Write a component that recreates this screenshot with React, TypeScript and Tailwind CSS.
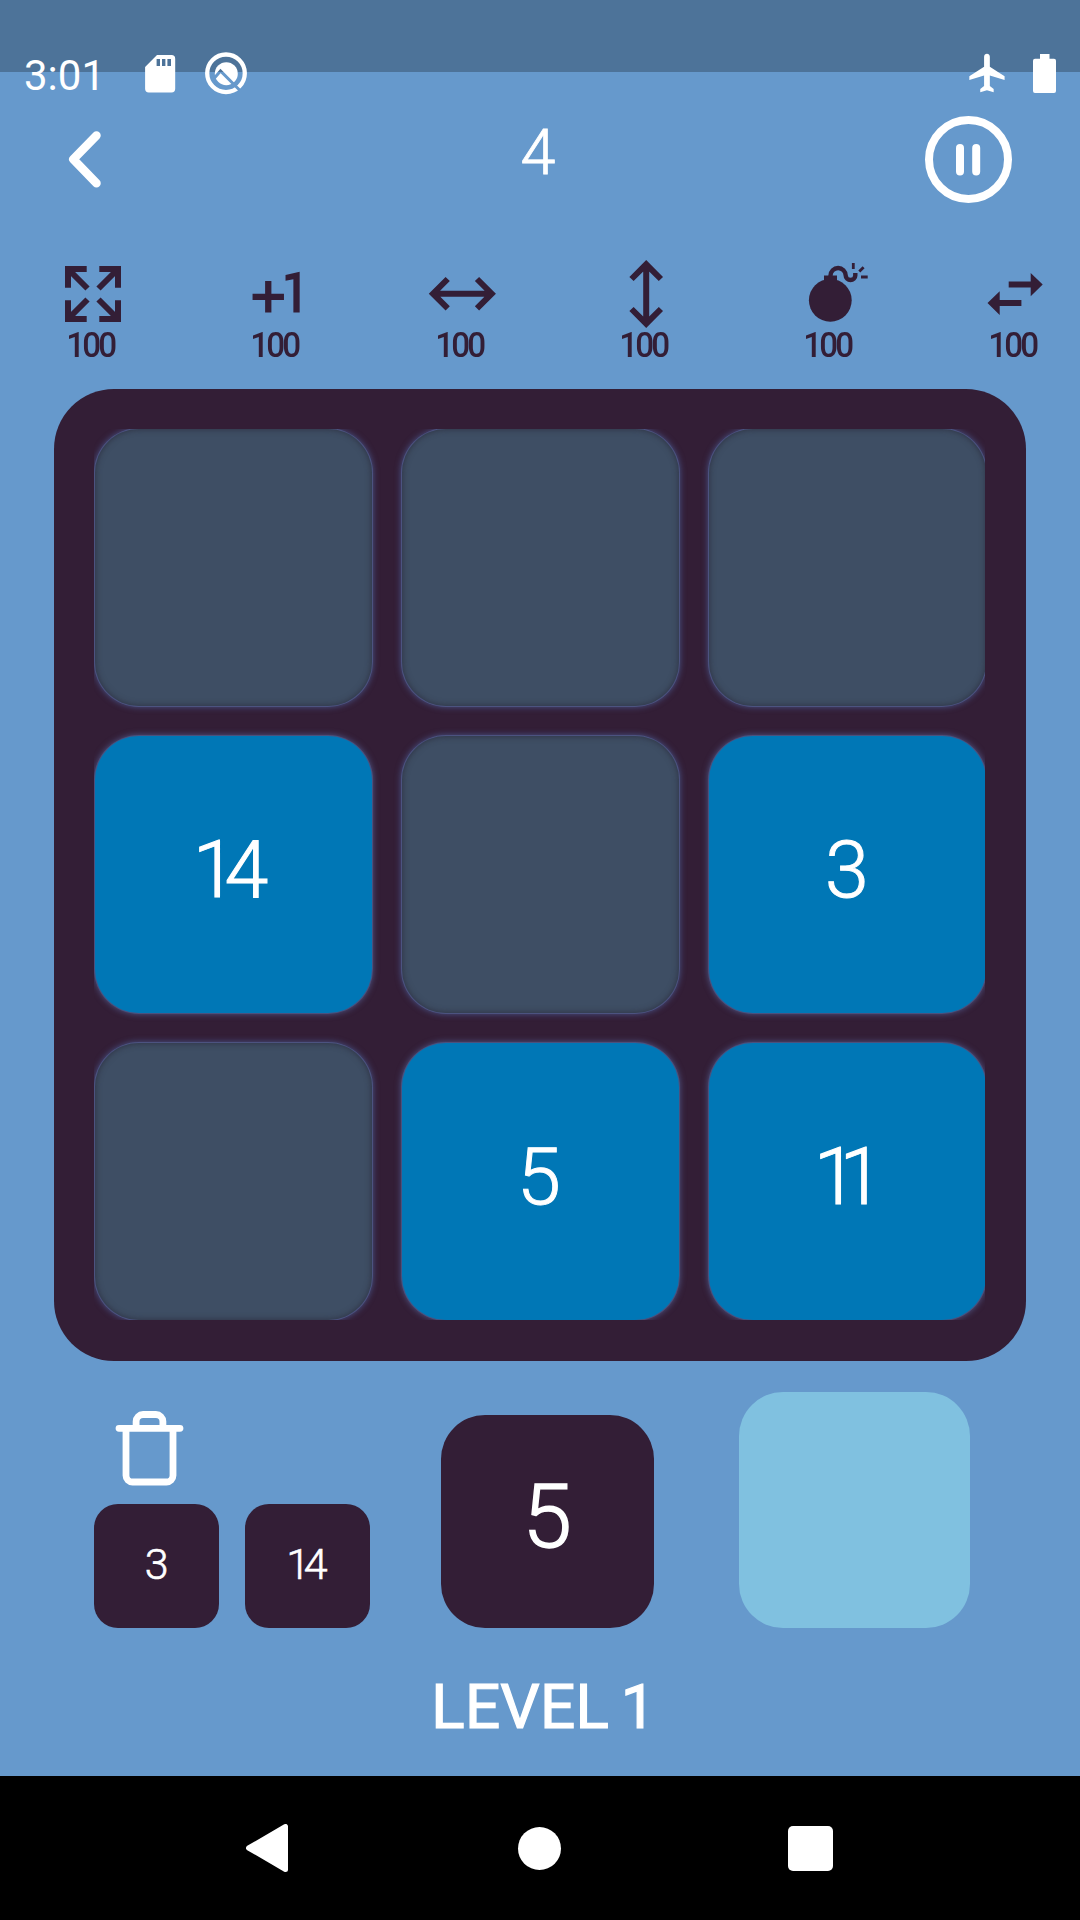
import type { ReactNode } from 'react';

function PowerIcon({ children }: { children: ReactNode }) {
  return (
    <svg className="h-[76px] w-[76px]" viewBox="0 0 76 76" fill="none" stroke="#331e36" strokeWidth="6">
      {children}
    </svg>
  );
}

const powerUps = [
  <PowerIcon key="expand">
    <path d="M31.7 13H13v18.7M13 13l19.5 19.5M44.3 13H63v18.7M63 13 43.5 32.5M31.7 63H13V44.3M13 63l19.5-19.5M44.3 63H63V44.3M63 63 43.5 43.5" />
  </PowerIcon>,
  <PowerIcon key="plus">
    <path
      transform="scale(3.14)"
      fill="#331e36"
      stroke="none"
      d="M10 8H8v4H4v2h4v4h2v-4h4v-2h-4zm4.5-1.92V7.9l2.5-.5V18h2V5z"
    />
  </PowerIcon>,
  <PowerIcon key="row">
    <path d="M9 37.7h58.7M23.7 23 9 37.7l14.7 14.7M53 23l14.7 14.7L53 52.4" />
  </PowerIcon>,
  <PowerIcon key="column">
    <path d="M38.2 8.5v59M23.5 23 38.2 8.3 52.9 23M23.5 53l14.7 14.7L52.9 53" />
  </PowerIcon>,
  <PowerIcon key="bomb">
    <circle cx="37.3" cy="44.3" r="21.4" fill="#331e36" stroke="none" />
    <path d="M31 19.5h13V28H31z" fill="#331e36" stroke="none" />
    <path strokeWidth="4.4" d="M37.5 22v-2.4a7.6 7.6 0 0 1 15.2 0a4.8 4.4 0 0 0 9.6 0V17" />
    <path strokeWidth="2.8" d="M60.3 7v6M66.3 15.6l4.3-4.3M68 21h6.7" />
  </PowerIcon>,
  <PowerIcon key="swap">
    <path
      fill="#331e36"
      stroke="none"
      d="M31.7 25.5h22V17l12 11.6-12 11.7v-8.8h-22zM44.4 44H22.7v-8.7L10.5 47l12.2 12v-9h21.7z"
    />
  </PowerIcon>,
];

const board: { value: string; fit: string }[] = [
  { value: '', fit: '' },
  { value: '', fit: '' },
  { value: '', fit: '' },
  { value: '14', fit: 'tracking-[-12px] -ml-[18px]' },
  { value: '', fit: '' },
  { value: '3', fit: '-ml-[1px]' },
  { value: '', fit: '' },
  { value: '5', fit: '-ml-[3px]' },
  { value: '11', fit: 'tracking-[-18px] -ml-[16px]' },
];

function Tile({ value, fit }: { value: string; fit: string }) {
  if (!value) {
    return (
      <div className="rounded-[44px] bg-[#3e4e64] shadow-[inset_0_0_6px_0_rgba(40,40,55,0.8),0_0_0_1px_#4c5380,0_0_6px_1px_rgba(78,98,155,0.8)]" />
    );
  }
  return (
    <div className="flex items-center justify-center rounded-[44px] bg-[#0077b6] pb-[9px] text-[79px] leading-none font-light text-white shadow-[0_0_0_1px_rgba(80,95,145,0.6),0_0_6px_1px_rgba(90,105,160,0.75)] [-webkit-text-stroke:1px_white]">
      <span className={fit}>{value}</span>
    </div>
  );
}

function StatusBar() {
  return (
    <header className="flex h-[72px] shrink-0 items-start bg-[#4d7399] px-6 text-white">
      <span className="mt-[55px] w-[113px] text-[42px] leading-none">3:01</span>
      <svg className="mt-[50px] h-[48px] w-[48px]" viewBox="137 50 48 48" fill="#fff">
        <path
          fillRule="evenodd"
          d="M157 55h14.5a3.7 3.7 0 0 1 3.7 3.7v30a3.7 3.7 0 0 1-3.7 3.7h-22.7a3.7 3.7 0 0 1-3.7-3.7V67zM156.6 59v7h3.4v-7zM162 59v7h3.4v-7zM167.4 59v7h3.6v-7z"
        />
      </svg>
      <svg className="mt-[50px] ml-[17px] h-[48px] w-[48px]" viewBox="202 50 48 48">
        <mask id="dial">
          <rect x="202" y="50" width="48" height="48" fill="#fff" />
          <path d="m214 78.5 6.5-7.5 15 15" fill="none" stroke="#000" strokeWidth="3" />
          <path d="m233.500 84 7 7" stroke="#000" strokeWidth="3" />
        </mask>
        <g mask="url(#dial)">
          <circle cx="226" cy="73.3" r="18.8" fill="none" stroke="#fff" strokeWidth="4.3" />
          <circle cx="226.3" cy="73.7" r="11.5" fill="#fff" />
        </g>
      </svg>
      <svg className="mt-[50px] ml-auto h-[46px] w-[46px]" viewBox="0 0 24 24" fill="#fff">
        <path d="M21.7 15.7v-1.95L14 8.7V3.5c0-.8-.7-1.500-1.500-1.500S11 2.700 11 3.500v5.200l-7.700 5.050v1.950L11 13.300v5.500l-2 1.600V22l3.500-1 3.500 1v-1.600l-2-1.600v-5.500z" />
      </svg>
      <svg className="mt-[54px] ml-[24px] h-[39px] w-[23px]" viewBox="0 0 23 39" fill="#fff">
        <path d="M7 0h9.5v4.7H21a2 2 0 0 1 2 2V37a2 2 0 0 1-2 2H2a2 2 0 0 1-2-2V6.7a2 2 0 0 1 2-2h5z" />
      </svg>
    </header>
  );
}

export default function App() {
  return (
    <div className="flex h-[1920px] w-[1080px] flex-col overflow-hidden bg-[#6699cc] font-['Roboto',sans-serif]">
      <StatusBar />

      <section className="grid h-[184px] shrink-0 grid-cols-3 items-start px-[68px] pt-[44px] text-white">
        <svg className="mt-[12px] h-[64px] w-[40px]" viewBox="0 0 40 64" fill="none" stroke="#fff" strokeWidth="8.5" strokeLinecap="round" strokeLinejoin="round">
          <path d="M28.5 7.5 5.3 31.3l23.2 23.9" />
        </svg>
        <span className="mt-[5px] -ml-[4px] text-center text-[63px] leading-none font-light [-webkit-text-stroke:0.8px_white]">4</span>
        <svg className="h-[88px] w-[88px] justify-self-end" viewBox="0 0 88 88" fill="none" stroke="#fff" strokeWidth="8" strokeLinecap="round">
          <circle cx="44.5" cy="43.5" r="39.5" />
          <path d="M36 32v23.5M52.2 32v23.5" />
        </svg>
      </section>

      <section className="ml-[1px] grid h-[133px] shrink-0 grid-cols-[repeat(6,184.4px)]">
        {powerUps.map((icon, i) => (
          <div key={i} className="flex flex-col items-center">
            {icon}
            <span className="-mt-[4px] -ml-[6px] scale-x-95 text-[35px] leading-none font-medium tracking-[-3px] text-[#331e36]">100</span>
          </div>
        ))}
      </section>

      <main className="mx-[54px] h-[972px] shrink-0 rounded-[60px] bg-[#331e36] p-10">
        <div className="grid h-[891px] w-[891px] grid-cols-[repeat(3,277px)] grid-rows-[repeat(3,277px)] gap-[30px] overflow-hidden pl-[1px]">
          {board.map((tile, i) => (
            <Tile key={i} value={tile.value} fit={tile.fit} />
          ))}
        </div>
      </main>

      <section className="flex h-[266.5px] shrink-0 items-end pl-[94.4px] font-light text-white">
        <div className="flex w-[275.5px] flex-col">
          <svg className="mb-[15px] ml-[20px] h-[78px] w-[72px]" viewBox="114.5 1411 72 78" fill="none" stroke="#fff" strokeWidth="6.8" strokeLinecap="round">
            <path d="M119.5 1428.3h61M126.5 1430v45.5a6.5 6.5 0 0 0 6.5 6.5h34a6.5 6.5 0 0 0 6.5-6.5V1430M136.6 1427v-5.5a7 7 0 0 1 7-7h12.8a7 7 0 0 1 7 7v5.5" />
          </svg>
          <div className="flex justify-between text-[43px] leading-none [-webkit-text-stroke:0.6px_white]">
            <div className="flex h-[124px] w-[124.5px] items-center justify-center rounded-[24px] bg-[#331e36] pb-[2px]">3</div>
            <div className="flex h-[124px] w-[124.5px] items-center justify-center rounded-[24px] bg-[#331e36] pb-[2px]">
              <span className="-ml-[8px] tracking-[-6.5px]">14</span>
            </div>
          </div>
        </div>
        <div className="ml-[70.8px] flex h-[213px] w-[213px] items-center justify-center rounded-[44px] bg-[#331e36] pb-[10px] text-[89px] leading-none [-webkit-text-stroke:1.4px_white]">5</div>
        <div className="ml-[85.8px] h-[236px] w-[231px] rounded-[44px] bg-[#80c1e0]" />
      </section>

      <footer className="flex grow items-start justify-center pt-[48px] pl-[7px] text-[62px] leading-none tracking-[0.2px] text-white [word-spacing:-4px] [-webkit-text-stroke:1.2px_white]">
        LEVEL 1
      </footer>

      <nav className="flex h-[144px] shrink-0 items-center justify-between bg-black pr-[247px] pl-[246px]">
        <svg className="h-[48px] w-[42px]" viewBox="0 0 42 48" fill="#fff" stroke="#fff" strokeWidth="5" strokeLinejoin="round">
          <path d="M2.5 24 39.5 2.5v43z" />
        </svg>
        <div className="ml-[3px] h-[43px] w-[43px] rounded-full bg-white" />
        <div className="h-[45px] w-[45px] rounded-[5px] bg-white" />
      </nav>
    </div>
  );
}
